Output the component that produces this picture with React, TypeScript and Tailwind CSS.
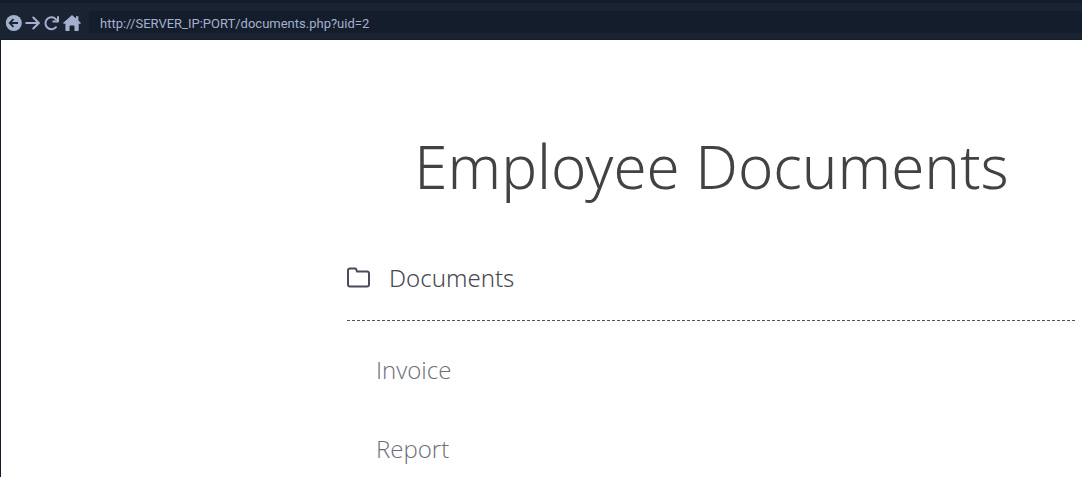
import type { ReactNode } from "react";

function NavButton({ label, children }: { label: string; children: ReactNode }) {
  return (
    <button type="button" aria-label={label} className="flex shrink-0 items-center justify-center text-[#a4b1cd]">
      {children}
    </button>
  );
}

function BrowserBar() {
  return (
    <header className="flex h-10 items-center border-t-[3px] border-b border-[#141d2b] bg-[#1a2332]">
      <nav aria-label="Browser" className="flex w-[89px] shrink-0 items-center gap-[3px] pt-1 pl-[5px]">
        <NavButton label="Back">
          <svg width="17" height="16" viewBox="0 0 17 16" aria-hidden="true">
            <circle cx="8.8" cy="8" r="8" fill="currentColor" />
            <path d="M13 8H5M8.5 4.2 4.7 8l3.8 3.8" fill="none" stroke="#1a2332" strokeWidth="1.8" />
          </svg>
        </NavButton>
        <NavButton label="Forward">
          <svg width="15" height="16" viewBox="0 0 15 16" aria-hidden="true">
            <path d="M1.2 8H14M8.3 2.5 13.8 8l-5.5 5.5" fill="none" stroke="currentColor" strokeWidth="2" strokeLinejoin="round" strokeLinecap="round" />
          </svg>
        </NavButton>
        <NavButton label="Reload">
          <svg width="17" height="16" viewBox="0 0 17 16" aria-hidden="true">
            <path d="M13.2 4.6A6 6 0 1 0 13 12.2" fill="none" stroke="currentColor" strokeWidth="2" strokeLinecap="round" />
            <path d="M15 1.2V6.5H9.5" fill="none" stroke="currentColor" strokeWidth="2" strokeLinejoin="round" />
          </svg>
        </NavButton>
        <NavButton label="Home">
          <svg width="18" height="16" viewBox="0 0 18 16" aria-hidden="true">
            <path d="M9 0 .3 7.7q-.5.9.5 1.1H2.4V15q0 1 1 1H6.5V11.5q0-1 1-1h3q1 0 1 1V16h3.2q1 0 1-1V8.8h1.5q1-.2.5-1.1L15.4 5.4V1.2H13v2.2Z" fill="currentColor" />
          </svg>
        </NavButton>
      </nav>
      <input
        type="text"
        aria-label="Address"
        defaultValue="http://SERVER_IP:PORT/documents.php?uid=2"
        className="mt-0.5 h-[22px] min-w-0 flex-1 rounded-l bg-[#141d2b] pt-0.5 pl-[11px] font-['Roboto',sans-serif] text-[13px] font-normal text-[#a4b1cd] outline-none"
      />
    </header>
  );
}

export default function App() {
  return (
    <div className="flex min-h-screen flex-col bg-white font-['Noto_Sans','Open_Sans',sans-serif] font-light">
      <BrowserBar />
      <main className="flex-1 border-l border-[#141d2b] pt-[84px] pr-[6px] pl-[346px]">
        <h1 className="text-center text-6xl leading-[84px] whitespace-nowrap text-[#424242]">Employee Documents</h1>
        <section aria-labelledby="documents-title">
          <div className="mt-[54px] flex items-center gap-[18px] pb-[26px]">
            <svg width="24" height="32" viewBox="0 0 24 32" fill="none" stroke="#4b4c59" strokeWidth="2" strokeLinejoin="round" aria-hidden="true">
              <path d="M3 6.5H8q.9 0 1.2.8L10.1 9.6H20q2 0 2 2V22.5q0 2-2 2H3q-2 0-2-2V8.5q0-2 2-2Z" />
            </svg>
            <h2 id="documents-title" className="text-2xl text-[#464853]">Documents</h2>
          </div>
          <svg className="block w-full" height="1" aria-hidden="true">
            <line x1="0" y1="0.5" x2="100%" y2="0.5" stroke="#555" strokeDasharray="3 2" />
          </svg>
          <ul className="flex flex-col gap-[47px] pt-[33px] pl-[29px] font-['Open_Sans',sans-serif] text-2xl text-[#6b6e78]">
            <li><a href="#invoice">Invoice</a></li>
            <li><a href="#report">Report</a></li>
          </ul>
        </section>
      </main>
    </div>
  );
}
